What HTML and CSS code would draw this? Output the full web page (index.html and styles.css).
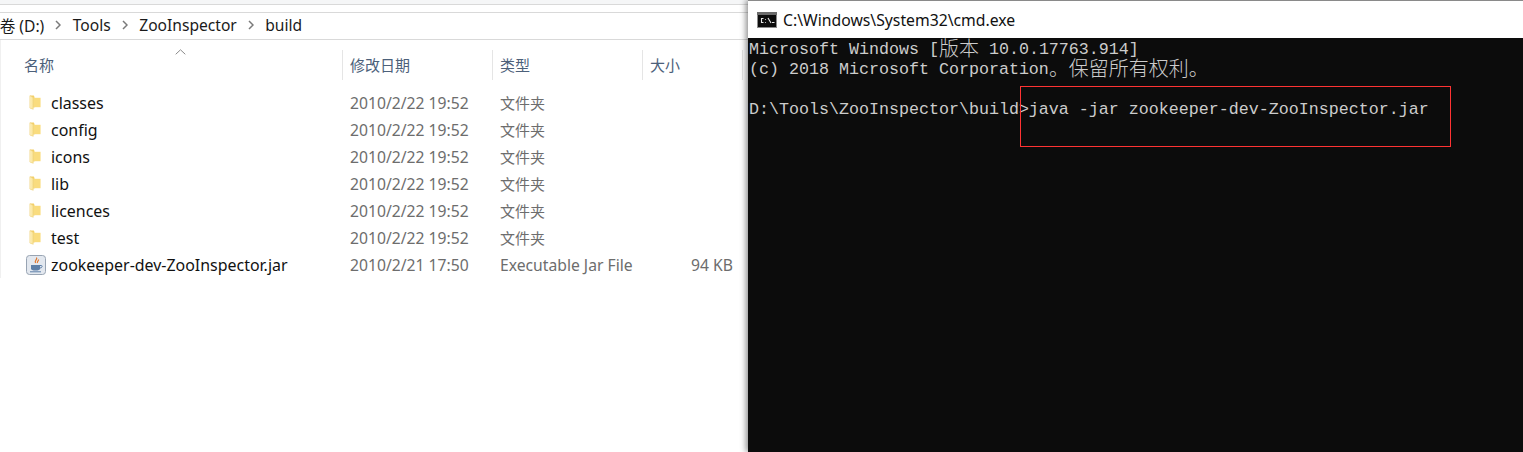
FILE: index.html
```html
<!DOCTYPE html>
<html lang="zh">
<head>
<meta charset="utf-8">
<title>build</title>
<link rel="stylesheet" href="styles.css">
</head>
<body>
<svg class="defs" width="0" height="0" aria-hidden="true">
  <defs>
    <linearGradient id="fg" x1="0" y1="0" x2="1" y2="0">
      <stop offset="0" stop-color="#fff3c4"/>
      <stop offset="1" stop-color="#f8df8c"/>
    </linearGradient>
    <symbol id="folder" viewBox="0 0 14 18">
      <path d="M1 .8h4.600l.8 1.700v12.300H4.500V17L1 15.500Z" fill="#f3cf68"/>
      <path d="M5 3.500h8.500V14.500H5Z" fill="#f9dc7e"/>
      <path d="M1 1.200L5 3.200V17L1 15.500Z" fill="url(#fg)"/>
      <path d="M1 1.200L5 3.200V17L1 15.500Z" fill="none" stroke="#ecd07c" stroke-width=".5"/>
    </symbol>
  </defs>
</svg>
<main class="desktop">
  <section class="explorer">
    <div class="ribbon-edge"></div>
    <nav class="crumbs">
      <span class="crumb first">新加卷 (D:)</span>
      <svg class="sep" width="6" height="10" viewBox="0 0 6 10"><path d="M1 1l4 4-4 4" fill="none" stroke="#7a7a7a" stroke-width="1.5"/></svg>
      <span class="crumb">Tools</span>
      <svg class="sep" width="6" height="10" viewBox="0 0 6 10"><path d="M1 1l4 4-4 4" fill="none" stroke="#7a7a7a" stroke-width="1.5"/></svg>
      <span class="crumb">ZooInspector</span>
      <svg class="sep" width="6" height="10" viewBox="0 0 6 10"><path d="M1 1l4 4-4 4" fill="none" stroke="#7a7a7a" stroke-width="1.5"/></svg>
      <span class="crumb">build</span>
    </nav>
    <div class="files">
      <div class="head">
        <div class="hcell name-h">名称
          <svg class="sort" width="11" height="6" viewBox="0 0 11 6"><path d="M.7 5.300L5.500.8l4.800 4.500" fill="none" stroke="#8a8a8a"/></svg>
        </div>
        <div class="hcell">修改日期</div>
        <div class="hcell">类型</div>
        <div class="hcell">大小</div>
        <div class="hcell tail"></div>
      </div>
      <div class="row">
        <div class="nm"><svg class="ico" width="12" height="17"><use href="#folder"/></svg>classes</div>
        <div class="cell">2010/2/22 19:52</div><div class="cell kind">文件夹</div><div class="cell"></div>
      </div>
      <div class="row">
        <div class="nm"><svg class="ico" width="12" height="17"><use href="#folder"/></svg>config</div>
        <div class="cell">2010/2/22 19:52</div><div class="cell kind">文件夹</div><div class="cell"></div>
      </div>
      <div class="row">
        <div class="nm"><svg class="ico" width="12" height="17"><use href="#folder"/></svg>icons</div>
        <div class="cell">2010/2/22 19:52</div><div class="cell kind">文件夹</div><div class="cell"></div>
      </div>
      <div class="row">
        <div class="nm"><svg class="ico" width="12" height="17"><use href="#folder"/></svg>lib</div>
        <div class="cell">2010/2/22 19:52</div><div class="cell kind">文件夹</div><div class="cell"></div>
      </div>
      <div class="row">
        <div class="nm"><svg class="ico" width="12" height="17"><use href="#folder"/></svg>licences</div>
        <div class="cell">2010/2/22 19:52</div><div class="cell kind">文件夹</div><div class="cell"></div>
      </div>
      <div class="row">
        <div class="nm"><svg class="ico" width="12" height="17"><use href="#folder"/></svg>test</div>
        <div class="cell">2010/2/22 19:52</div><div class="cell kind">文件夹</div><div class="cell"></div>
      </div>
      <div class="row">
        <div class="nm jar">
          <svg class="ico-jar" width="20" height="20" viewBox="0 0 20 20">
            <rect x=".5" y=".5" width="19" height="19" rx="3" fill="#e3e8ef" stroke="#98a4b3"/>
            <path d="M10.500 2.500c1.500 2-2.500 3-1 5.500M12.500 4.500c.5 1.500-2 2-1 3.500" fill="none" stroke="#e0752a" stroke-width="1.200"/>
            <path d="M5 10h9v3.500c0 1.500-1.500 2-4.500 2S5 15 5 13.500Z" fill="#5d7fa8"/>
            <path d="M14 10.500h1.500c1 0 1 2.500-1.500 2.500" fill="none" stroke="#5d7fa8"/>
            <path d="M4 16.800h11" stroke="#5d7fa8"/>
          </svg>zookeeper-dev-ZooInspector.jar
        </div>
        <div class="cell">2010/2/21 17:50</div><div class="cell">Executable Jar File</div><div class="cell size">94 KB</div>
      </div>
    </div>
  </section>
  <section class="cmd">
    <header class="titlebar">
      <svg class="cmd-ico" width="20" height="16" viewBox="0 0 20 16">
        <rect width="20" height="16" fill="#8c8c8c"/>
        <rect x="0" y="0" width="20" height="3" fill="#6b6b6b"/>
        <rect x="1" y="3" width="18" height="12" fill="#0c0c0c"/>
        <path d="M6.500 6.500h-2v4h2M8.500 7v.8M8.500 10v.8M11 6l3 5M15 10.500h2.500" fill="none" stroke="#e6e6e6" stroke-width="1.100"/>
      </svg>
      <span class="title">C:\Windows\System32\cmd.exe</span>
    </header>
    <div class="console">
      <div class="line">Microsoft Windows [<span class="cjk">版本</span> 10.0.17763.914]</div>
      <div class="line">(c) 2018 Microsoft Corporation<span class="cjk">。保留所有权利。</span></div>
      <div class="line">&nbsp;</div>
      <div class="line">D:\Tools\ZooInspector\build&gt;java -jar zookeeper-dev-ZooInspector.jar</div>
    </div>
    <div class="mark"></div>
  </section>
</main>
</body>
</html>
```

FILE: styles.css
```css
* { box-sizing: border-box; }
html, body { margin: 0; height: 100%; background: #fff; overflow: hidden; }
.defs { position: absolute; }
.desktop {
  display: flex;
  width: 1523px;
  height: 452px;
  overflow: hidden;
  font-family: "Noto Sans", "Noto Sans CJK SC", sans-serif;
}
.explorer { width: 748px; flex: none; overflow: hidden; background: #fff; }
.ribbon-edge {
  height: 12px;
  background: linear-gradient(#f5f6f7 0 4px, #d9d9d9 4px 5px, #fff 5px);
}
.crumbs {
  display: flex;
  align-items: center;
  height: 28px;
  padding-bottom: 2px;
  border-top: 1px solid #d9d9d9;
  border-bottom: 1px solid #d9d9d9;
  font-size: 15.6px;
  color: #1a1a1a;
  white-space: nowrap;
}
.crumb.first { margin-left: -31.5px; }
.sep { margin: 0 11.5px 0 11px; flex: none; }
.files { padding-top: 10px; border-left: 1px solid #f0f0f0; }
.head {
  display: grid;
  grid-template-columns: 342px 150px 150px 100px 5px;
  height: 30px;
}
.hcell {
  display: flex;
  align-items: center;
  padding-left: 7px;
  padding-bottom: 1px;
  font-size: 15px;
  color: #4c607a;
  border-right: 1px solid #e5e5e5;
  white-space: nowrap;
}
.hcell.tail { border-right: 0; }
.name-h { position: relative; padding-left: 23px; }
.sort { position: absolute; left: 174px; top: -1px; }
.row {
  display: grid;
  grid-template-columns: 341px 150px 150px 91px;
  height: 27px;
  align-items: center;
  font-size: 15.7px;
}
.head + .row { margin-top: 9px; }
.nm {
  display: flex;
  align-items: center;
  padding-left: 28px;
  color: #111;
  font-size: 15.95px;
  white-space: nowrap;
}
.ico { margin-right: 10px; flex: none; }
.nm.jar { padding-left: 25px; }
.ico-jar { margin-right: 5px; flex: none; }
.cell { padding-left: 8px; color: #6d6d6d; white-space: nowrap; }
.cell.kind { font-size: 15px; }
.cell.size { text-align: right; padding: 0; }
.cmd {
  position: relative;
  flex: 1;
  display: flex;
  flex-direction: column;
  background: #0c0c0c;
  border-top: 1px solid #8a8a8a;
  box-shadow: -2px 0 6px rgba(0, 0, 0, .45);
}
.titlebar {
  display: flex;
  align-items: center;
  height: 37px;
  padding-left: 9px;
  background: #fff;
  flex: none;
}
.cmd-ico { margin-right: 6px; flex: none; }
.title { font-size: 15.75px; color: #111; white-space: nowrap; }
.console {
  padding: 2px 0 0 1px;
  color: #cccccc;
  font-family: "Liberation Mono", "Noto Sans CJK SC", monospace;
  font-size: 16.67px;
  line-height: 20px;
}
.line { height: 20px; white-space: pre; }
.cjk { font-family: "Noto Sans CJK SC", sans-serif; font-size: 19.99px; line-height: 0; font-weight: 300; vertical-align: -2px; }
.mark {
  position: absolute;
  left: 272px;
  top: 85px;
  width: 431px;
  height: 61px;
  border: 1px solid #f33;
}
```
